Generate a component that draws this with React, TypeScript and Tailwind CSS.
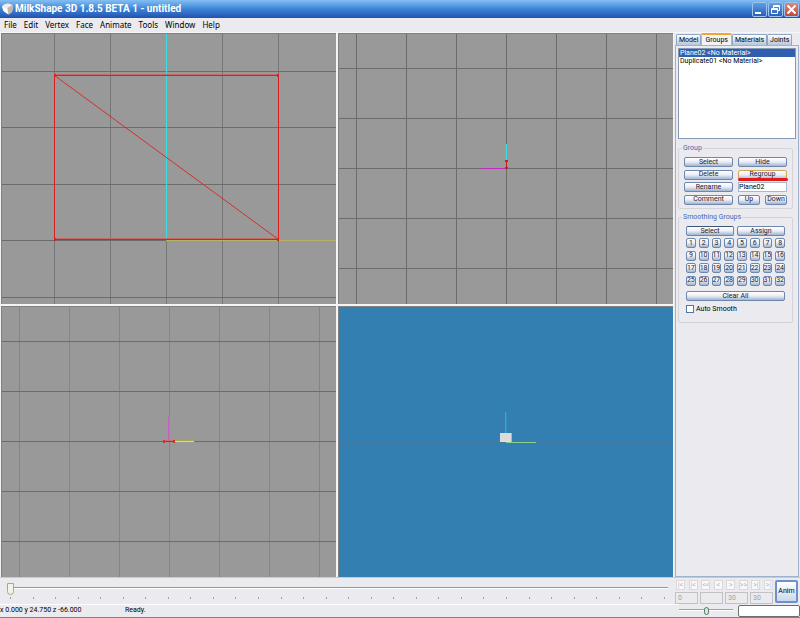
import { useState } from 'react';

const MENUS = ['File', 'Edit', 'Vertex', 'Face', 'Animate', 'Tools', 'Window', 'Help'];
const TABS = ['Model', 'Groups', 'Materials', 'Joints'];
const GROUPS = ['Plane02 <No Material>', 'Duplicate01 <No Material>'];
const TRANSPORT = ['|<', '|<', '<<', '<', '>', '>>', '>|', '>|'];
const FRAMES = ['0', '', '30', '30'];

const button =
    'flex h-[10px] min-w-0 items-center justify-center overflow-hidden rounded-xs border border-[#6d87ad] bg-linear-to-b from-white via-[#e9edf5] to-[#9fb4d3] text-[7px] leading-none text-[#1c222c]';

function GridLines({
    xs,
    ys,
    columnColor = '#6c6c6c',
}: {
    xs: number[];
    ys: number[];
    columnColor?: string;
}) {
    return (
        <g>
            {xs.map((x) => (
                <rect key={`x${x}`} x={x} y="0" width="1" height="400" fill={columnColor} />
            ))}
            {ys.map((y) => (
                <rect key={`y${y}`} x="0" y={y} width="400" height="1" fill="#6c6c6c" />
            ))}
        </g>
    );
}

function Viewport({
    label,
    color = 'bg-[#999999]',
    children,
}: {
    label: string;
    color?: string;
    children: React.ReactNode;
}) {
    return (
        <div className={`min-h-0 min-w-0 overflow-hidden border-t border-l border-[#808080] ${color}`}>
            <svg
                aria-label={label}
                viewBox="0 0 334 270"
                preserveAspectRatio="xMinYMin slice"
                className="block h-full w-full"
            >
                {children}
            </svg>
        </div>
    );
}

function Viewports() {
    return (
        <div className="grid min-w-0 flex-1 grid-cols-2 grid-rows-2 gap-[2px] border-x border-[#f4f4f6] bg-[#f4f4f6]">
            <Viewport label="Front">
                <GridLines
                    xs={[52, 108, 164, 220, 276]}
                    ys={[37, 93, 150, 206, 263]}
                    columnColor="#767676"
                />
                <rect x="164" y="0" width="1" height="207" fill="#35dfe3" />
                <rect x="164" y="206" width="236" height="1" fill="#b5b464" />
                <g fill="#c96a68">
                    <rect x="52" y="40" width="225" height="1" />
                    <rect x="52" y="204" width="225" height="1" />
                </g>
                <g fill="#d8201e">
                    <rect x="52" y="41" width="225" height="1" />
                    <rect x="52" y="205" width="225" height="1" />
                    <rect x="52" y="41" width="1" height="165" />
                    <rect x="276" y="41" width="1" height="165" />
                    <path d="M52 40h2v3h-2zM275 40h2v3h-2zM52 204h2v3h-2zM275 204h2v3h-2z" />
                </g>
                <path d="M52.5 41.5L276.5 205.5" stroke="#d3302c" />
            </Viewport>
            <Viewport label="Side">
                <GridLines
                    xs={[17, 67, 117, 167, 217, 267, 317]}
                    ys={[34, 84, 134, 184, 234]}
                />
                <rect x="167" y="110" width="1" height="17" fill="#35dfe3" />
                <rect x="142" y="134" width="25" height="1" fill="#c22ec4" />
                <path d="M167 127h1v8h-1zM166 126h3v2h-3zM166 133h3v2h-3z" fill="#c8201e" />
            </Viewport>
            <Viewport label="Top">
                <GridLines
                    xs={[17, 67, 117, 167, 217, 267, 317]}
                    ys={[34, 84, 134, 184, 234]}
                    columnColor="#858585"
                />
                <rect x="166" y="110" width="1" height="24" fill="#c45fc6" />
                <rect x="167" y="110" width="1" height="24" fill="#a880a9" />
                <rect x="173" y="133" width="19" height="1" fill="#aaa548" />
                <rect x="173" y="134" width="19" height="1" fill="#e8e534" />
                <rect x="162" y="133" width="11" height="1" fill="#d96a66" />
                <rect x="162" y="134" width="11" height="1" fill="#d2201c" />
                <path d="M161 133h2v3h-2zM171 133h2v3h-2z" fill="#d2302c" />
            </Viewport>
            <Viewport label="3D" color="bg-[#337fb2]">
                <rect x="0" y="135" width="400" height="1" fill="#417b9f" />
                <rect x="166" y="105" width="1" height="21" fill="#22b4cc" />
                <rect x="167" y="105" width="1" height="21" fill="#2f8fbc" />
                <rect x="167" y="135" width="30" height="1" fill="#8ccf88" />
                <rect x="161" y="126" width="12" height="9" fill="#dcdcdc" />
                <rect x="172" y="126" width="1" height="9" fill="#a9b6c2" />
            </Viewport>
        </div>
    );
}

function TitleBar() {
    const box =
        'flex size-[15px] items-center justify-center rounded-xs border border-[#9fc3f0] text-white';
    return (
        <header className="flex h-[18px] shrink-0 items-center bg-linear-to-b from-[#83bff2] via-[#3d83d6] to-[#2351b0] pr-px pl-[2px]">
            <svg viewBox="0 0 12 12" className="size-3" aria-hidden="true">
                <path d="M0 3.5L2 1.5L6 0.5L10.5 2L11 6L9.5 9.5L6.5 11.5L1.5 8Z" fill="#d9d6d4" />
                <path d="M0 3.5L5.5 5L6 11.2L1.5 8Z" fill="#ffffff" />
                <path d="M0 3.5L2 1.5L6 0.5L10.5 2L5.5 5Z" fill="#efeeee" />
                <path d="M5.5 5L10.5 2L11 6L9.5 9.5L6.5 11.5Z" fill="#bdb6b2" />
            </svg>
            <h1 className="ml-px font-[Roboto,sans-serif] text-[10px] leading-none font-bold text-white">
                MilkShape 3D 1.8.5 BETA 1 - untitled
            </h1>
            <div className="ml-auto flex gap-px">
                <button aria-label="Minimize" className={`${box} bg-linear-to-b from-[#5e9fe2] to-[#2c5fb8]`}>
                    <svg viewBox="0 0 13 13" className="size-[13px]">
                        <path d="M2 9h6v2H2z" fill="currentColor" />
                    </svg>
                </button>
                <button aria-label="Restore" className={`${box} bg-linear-to-b from-[#5e9fe2] to-[#2c5fb8]`}>
                    <svg viewBox="0 0 13 13" className="size-[13px]" fill="none" stroke="currentColor">
                        <path d="M4.5 5V2.5H10.5V7.5H9M4 3.5H11" />
                        <path d="M2.5 5.5H8.5V10.5H2.5ZM2 6.5H9" />
                    </svg>
                </button>
                <button aria-label="Close" className={`${box} bg-linear-to-b from-[#d98878] to-[#c4473a]`}>
                    <svg viewBox="0 0 13 13" className="size-[13px]">
                        <path d="M2.5 2.5L10.5 10.5M10.5 2.5L2.5 10.5" stroke="currentColor" strokeWidth="2" />
                    </svg>
                </button>
            </div>
        </header>
    );
}

function SidePanel() {
    const [tab, setTab] = useState('Groups');
    const [selected, setSelected] = useState(0);

    return (
        <aside className="flex w-[126px] shrink-0 flex-col px-px">
            <div role="tablist" className="flex h-3 items-end pl-px">
                {TABS.map((name) => (
                    <button
                        key={name}
                        role="tab"
                        aria-selected={tab === name}
                        onClick={() => setTab(name)}
                        className={
                            tab === name
                                ? 'h-3 rounded-t-xs border-x border-t-2 border-x-[#a9b8cc] border-t-[#eea53a] bg-[#f3f3f6] px-[3px] text-[7px] leading-none'
                                : 'h-[11px] rounded-t-xs border border-b-0 border-[#8fa6c6] bg-linear-to-b from-white to-[#b4c6de] px-[2px] text-[7px] leading-none'
                        }
                    >
                        {name}
                    </button>
                ))}
            </div>
            <div className="flex flex-1 flex-col border border-[#9fb2cc] bg-[#ebebef] px-[2px] pt-[2px]">
                <ul role="listbox" aria-label="Groups" className="h-[91px] border border-[#8499b5] bg-white">
                    {GROUPS.map((name, i) => (
                        <li
                            key={name}
                            role="option"
                            aria-selected={selected === i}
                            onClick={() => setSelected(i)}
                            className={`h-2 pl-px text-[7px] leading-[8px] whitespace-nowrap ${
                                selected === i ? 'bg-[#2f5fae] text-white' : 'text-black'
                            }`}
                        >
                            {name}
                        </li>
                    ))}
                </ul>

                <fieldset className="mt-[4px] mr-[3px] rounded-xs border border-[#d3d3da] px-[5px] pb-[3px]">
                    <legend className="-ml-[2px] px-px text-[7px] leading-[10px] text-[#3f68b5]">Group</legend>
                    <div className="mt-[4px] grid h-12 grid-cols-2 content-between gap-x-[5px]">
                        <button className={button}>Select</button>
                        <button className={button}>Hide</button>
                        <button className={button}>Delete</button>
                        <div className="relative">
                            <button className={`${button} w-full border-[#cfa65a]`}>Regroup</button>
                            <span className="absolute -right-px left-0 top-2 h-[3px] rounded-full bg-[#e31b1b]" />
                        </div>
                        <button className={button}>Rename</button>
                        <input
                            aria-label="Group name"
                            defaultValue="Plane02"
                            className="h-[10px] min-w-0 border border-[#a9b8cc] bg-white text-[7px] leading-none"
                        />
                        <button className={button}>Comment</button>
                        <div className="grid grid-cols-2 gap-x-[5px]">
                            <button className={button}>Up</button>
                            <button className={button}>Down</button>
                        </div>
                    </div>
                </fieldset>

                <fieldset className="mt-[3px] mr-[3px] rounded-xs border border-[#d3d3da] px-[7px] pb-[8px]">
                    <legend className="-ml-[4px] px-px text-[7px] leading-[10px] text-[#3f68b5]">
                        Smoothing Groups
                    </legend>
                    <div className="mt-[4px] grid grid-cols-2 gap-x-[3px]">
                        <button className={`${button} border-t-[#3c5478]`}>Select</button>
                        <button className={`${button} border-[#2f66c0]`}>Assign</button>
                    </div>
                    <div className="mt-[2px] grid h-12 grid-cols-8 content-between gap-x-[3px]">
                        {Array.from({ length: 32 }, (_, i) => (
                            <button key={i} className={button}>
                                {i + 1}
                            </button>
                        ))}
                    </div>
                    <button className={`${button} mt-[5px] w-full`}>Clear All</button>
                    <label className="mt-[3px] flex items-center gap-[2px] text-[7px] leading-[10px]">
                        <input
                            type="checkbox"
                            className="size-2 appearance-none border border-[#56749c] bg-white checked:bg-[#56749c]"
                        />
                        Auto Smooth
                    </label>
                </fieldset>
            </div>
        </aside>
    );
}

function Timeline() {
    const [frame, setFrame] = useState(0);

    return (
        <div className="flex h-[27px] shrink-0 border-t border-[#c9c9cf]">
            <div className="min-w-0 flex-1 pr-[7px] pl-[7px]">
                <div className="relative mt-[5px] flex h-3 items-center">
                    <span className="absolute inset-x-0 top-[4px] h-[2px] border-t border-[#97978f] bg-white" />
                    <input
                        type="range"
                        aria-label="Frame"
                        min={0}
                        max={30}
                        value={frame}
                        onChange={(e) => setFrame(Number(e.target.value))}
                        className="relative h-3 w-full appearance-none bg-transparent [&::-webkit-slider-thumb]:h-3 [&::-webkit-slider-thumb]:w-[7px] [&::-webkit-slider-thumb]:appearance-none [&::-webkit-slider-thumb]:rounded-t-xs [&::-webkit-slider-thumb]:rounded-b-full [&::-webkit-slider-thumb]:border [&::-webkit-slider-thumb]:border-[#a5a88f] [&::-webkit-slider-thumb]:bg-[#f4f4e4]"
                    />
                </div>
                <div className="mt-[2px] flex justify-between px-[3px]">
                    {Array.from({ length: 30 }, (_, i) => (
                        <span key={i} className="h-[2px] w-px bg-[#a0a0a0]" />
                    ))}
                </div>
            </div>
            <div className="w-[99px] pt-[2px]">
                <div className="flex justify-between pr-px pl-px">
                    {TRANSPORT.map((label, i) => (
                        <button
                            key={i}
                            className="h-[10px] w-[9px] border border-[#d9d9de] bg-[#f8f8fa] text-[7px] leading-none text-[#b5b5b9]"
                        >
                            {label}
                        </button>
                    ))}
                </div>
                <div className="mt-[2px] flex gap-[2px]">
                    {FRAMES.map((value, i) => (
                        <input
                            key={i}
                            aria-label={`Frame field ${i + 1}`}
                            defaultValue={value}
                            disabled
                            className="h-3 w-[23px] border border-[#c2c2c6] bg-[#ebebee] pl-[2px] text-[7px] leading-none text-[#a0a0a4]"
                        />
                    ))}
                </div>
            </div>
            <button className="mt-[2px] mr-[2px] ml-px h-[23px] w-[23px] rounded-xs border-2 border-[#6c92cd] bg-linear-to-b from-white to-[#ccd8ea] text-[7px]">
                Anim
            </button>
        </div>
    );
}

function StatusBar() {
    return (
        <footer className="flex h-[14px] shrink-0 border-b border-[#7d857d] text-[7px]">
            <div className="flex flex-1 border-t border-white leading-[10px]">
                <span className="w-[125px]">x 0.000 y 24.750 z -66.000</span>
                <span>Ready.</span>
            </div>
            <div className="relative mr-[5px] flex w-[54px] items-center">
                <span className="absolute inset-x-0 top-[5px] h-[2px] border-t border-[#a3a39b] bg-white" />
                <input
                    type="range"
                    aria-label="Speed"
                    defaultValue={50}
                    className="relative h-2 w-full appearance-none bg-transparent [&::-webkit-slider-thumb]:h-2 [&::-webkit-slider-thumb]:w-[5px] [&::-webkit-slider-thumb]:appearance-none [&::-webkit-slider-thumb]:rounded-full [&::-webkit-slider-thumb]:border [&::-webkit-slider-thumb]:border-[#56796a] [&::-webkit-slider-thumb]:bg-[#d4e8dc]"
                />
            </div>
            <input
                aria-label="Command"
                className="mt-px h-3 w-[62px] rounded-xs border border-[#6e6e6e] bg-white text-[7px]"
            />
        </footer>
    );
}

export default function App() {
    return (
        <div className="flex h-screen flex-col overflow-hidden bg-[#ebeaee] font-[Roboto,sans-serif] text-black">
            <TitleBar />
            <nav className="flex h-[15px] shrink-0 items-center gap-[7px] border-b border-[#f6f6f8] pl-[4px] font-['Noto_Sans',sans-serif] text-[8px] leading-none">
                {MENUS.map((name) => (
                    <button key={name}>{name}</button>
                ))}
            </nav>
            <main className="flex min-h-0 flex-1">
                <Viewports />
                <SidePanel />
            </main>
            <Timeline />
            <StatusBar />
        </div>
    );
}
